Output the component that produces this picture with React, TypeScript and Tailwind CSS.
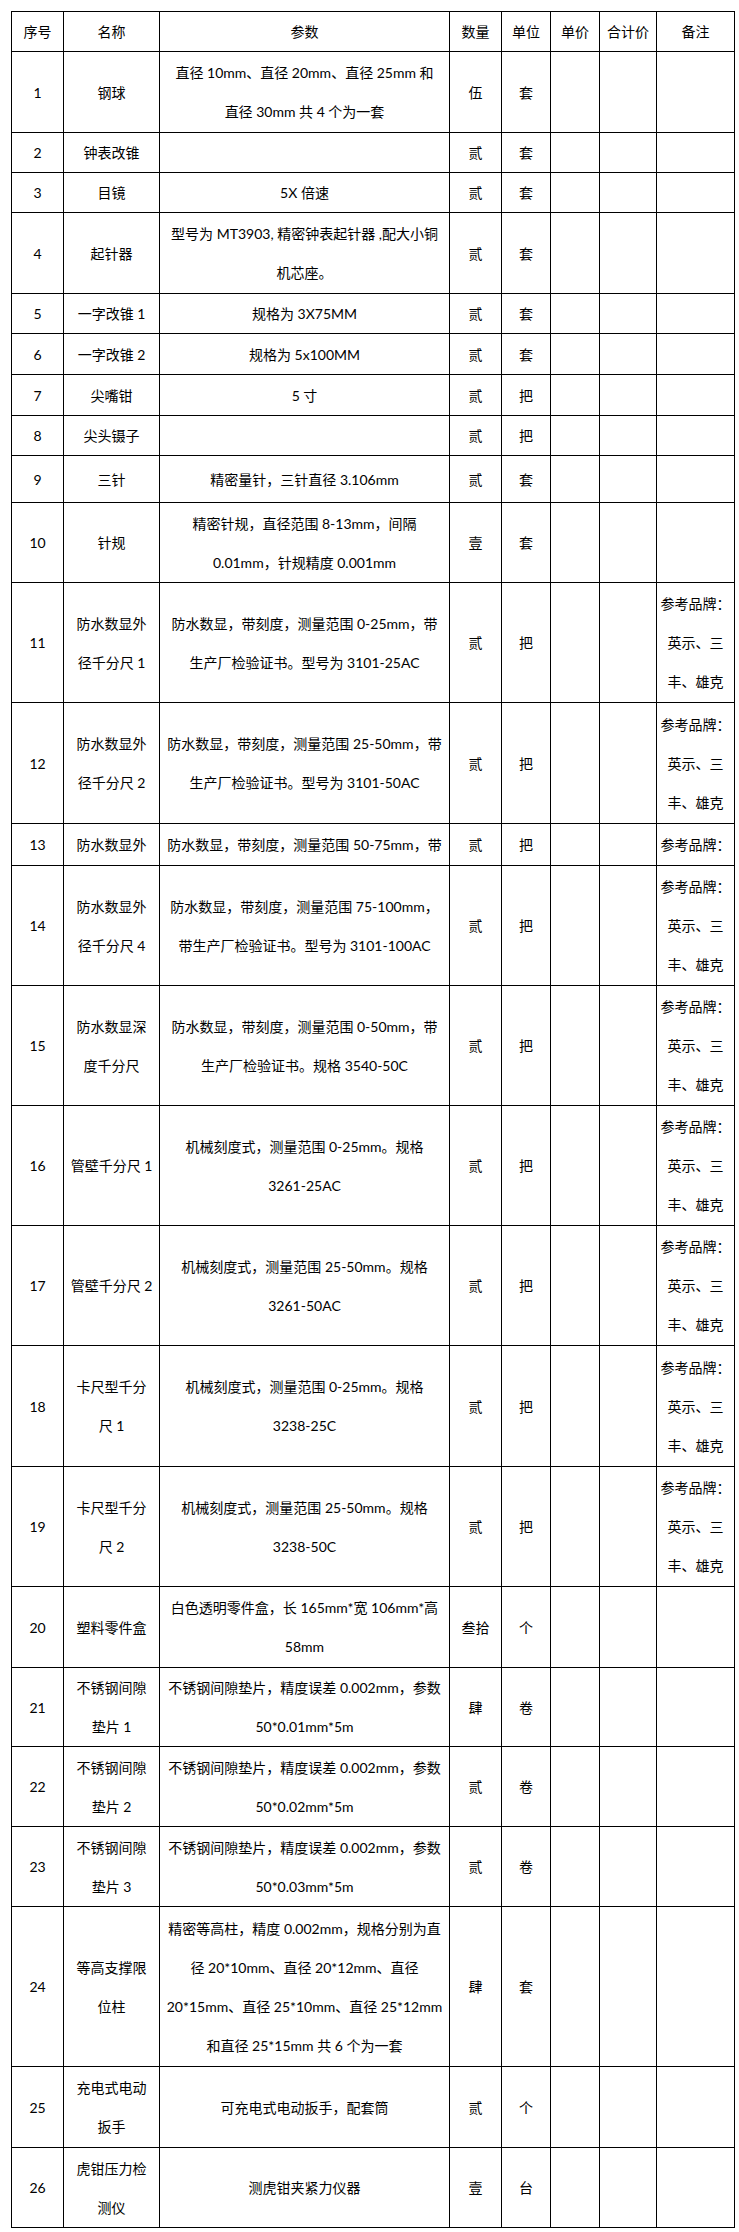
type Row = {
  no: string
  name: string[]
  spec: string[]
  qty: string
  unit: string
  note?: string[]
  h: number
}

const BRAND = ['参考品牌：', '英示、三', '丰、雄克']

const rows: Row[] = [
  { no: '1', name: ['钢球'], spec: ['直径 10mm、直径 20mm、直径 25mm 和', '直径 30mm 共 4 个为一套'], qty: '伍', unit: '套', h: 81 },
  { no: '2', name: ['钟表改锥'], spec: [], qty: '贰', unit: '套', h: 40 },
  { no: '3', name: ['目镜'], spec: ['5X 倍速'], qty: '贰', unit: '套', h: 40 },
  { no: '4', name: ['起针器'], spec: ['型号为 MT3903, 精密钟表起针器 ,配大小铜', '机芯座。'], qty: '贰', unit: '套', h: 81 },
  { no: '5', name: ['一字改锥 1'], spec: ['规格为 3X75MM'], qty: '贰', unit: '套', h: 40 },
  { no: '6', name: ['一字改锥 2'], spec: ['规格为 5x100MM'], qty: '贰', unit: '套', h: 41 },
  { no: '7', name: ['尖嘴钳'], spec: ['5 寸'], qty: '贰', unit: '把', h: 41 },
  { no: '8', name: ['尖头镊子'], spec: [], qty: '贰', unit: '把', h: 40 },
  { no: '9', name: ['三针'], spec: ['精密量针，三针直径 3.106mm'], qty: '贰', unit: '套', h: 47 },
  { no: '10', name: ['针规'], spec: ['精密针规，直径范围 8-13mm，间隔', '0.01mm，针规精度 0.001mm'], qty: '壹', unit: '套', h: 80 },
  { no: '11', name: ['防水数显外', '径千分尺 1'], spec: ['防水数显，带刻度，测量范围 0-25mm，带', '生产厂检验证书。型号为 3101-25AC'], qty: '贰', unit: '把', note: BRAND, h: 120 },
  { no: '12', name: ['防水数显外', '径千分尺 2'], spec: ['防水数显，带刻度，测量范围 25-50mm，带', '生产厂检验证书。型号为 3101-50AC'], qty: '贰', unit: '把', note: BRAND, h: 121 },
  { no: '13', name: ['防水数显外'], spec: ['防水数显，带刻度，测量范围 50-75mm，带'], qty: '贰', unit: '把', note: ['参考品牌：'], h: 42 },
  { no: '14', name: ['防水数显外', '径千分尺 4'], spec: ['防水数显，带刻度，测量范围 75-100mm，', '带生产厂检验证书。型号为 3101-100AC'], qty: '贰', unit: '把', note: BRAND, h: 120 },
  { no: '15', name: ['防水数显深', '度千分尺'], spec: ['防水数显，带刻度，测量范围 0-50mm，带', '生产厂检验证书。规格 3540-50C'], qty: '贰', unit: '把', note: BRAND, h: 120 },
  { no: '16', name: ['管壁千分尺 1'], spec: ['机械刻度式，测量范围 0-25mm。规格', '3261-25AC'], qty: '贰', unit: '把', note: BRAND, h: 120 },
  { no: '17', name: ['管壁千分尺 2'], spec: ['机械刻度式，测量范围 25-50mm。规格', '3261-50AC'], qty: '贰', unit: '把', note: BRAND, h: 120 },
  { no: '18', name: ['卡尺型千分', '尺 1'], spec: ['机械刻度式，测量范围 0-25mm。规格', '3238-25C'], qty: '贰', unit: '把', note: BRAND, h: 121 },
  { no: '19', name: ['卡尺型千分', '尺 2'], spec: ['机械刻度式，测量范围 25-50mm。规格', '3238-50C'], qty: '贰', unit: '把', note: BRAND, h: 120 },
  { no: '20', name: ['塑料零件盒'], spec: ['白色透明零件盒，长 165mm*宽 106mm*高', '58mm'], qty: '叁拾', unit: '个', h: 81 },
  { no: '21', name: ['不锈钢间隙', '垫片 1'], spec: ['不锈钢间隙垫片，精度误差 0.002mm，参数', '50*0.01mm*5m'], qty: '肆', unit: '卷', h: 78 },
  { no: '22', name: ['不锈钢间隙', '垫片 2'], spec: ['不锈钢间隙垫片，精度误差 0.002mm，参数', '50*0.02mm*5m'], qty: '贰', unit: '卷', h: 80 },
  { no: '23', name: ['不锈钢间隙', '垫片 3'], spec: ['不锈钢间隙垫片，精度误差 0.002mm，参数', '50*0.03mm*5m'], qty: '贰', unit: '卷', h: 80 },
  {
    no: '24',
    name: ['等高支撑限', '位柱'],
    spec: ['精密等高柱，精度 0.002mm，规格分别为直', '径 20*10mm、直径 20*12mm、直径', '20*15mm、直径 25*10mm、直径 25*12mm', '和直径 25*15mm 共 6 个为一套'],
    qty: '肆',
    unit: '套',
    h: 160,
  },
  { no: '25', name: ['充电式电动', '扳手'], spec: ['可充电式电动扳手，配套筒'], qty: '贰', unit: '个', h: 81 },
  { no: '26', name: ['虎钳压力检', '测仪'], spec: ['测虎钳夹紧力仪器'], qty: '壹', unit: '台', h: 80 },
]

function Lines({ lines }: { lines?: string[] }) {
  if (!lines || lines.length === 0) return null
  return (
    <>
      {lines.map((l, i) => (
        <div key={i} className="whitespace-nowrap">
          {l}
        </div>
      ))}
    </>
  )
}

const td = 'border border-black p-0 text-center align-middle overflow-hidden'

export default function App() {
  return (
    <div
      className="min-h-screen bg-white pt-[11px] pl-[11px] text-[14px] leading-[39px] text-black"
      style={{ fontFamily: 'Lato, "Noto Sans CJK SC", sans-serif' }}
    >
      <table className="table-fixed border-collapse w-[723px]">
        <colgroup>
          <col className="w-[52px]" />
          <col className="w-[96px]" />
          <col className="w-[290px]" />
          <col className="w-[52px]" />
          <col className="w-[49px]" />
          <col className="w-[49px]" />
          <col className="w-[57px]" />
          <col className="w-[78px]" />
        </colgroup>
        <thead>
          <tr className="h-[40px]">
            {['序号', '名称', '参数', '数量', '单位', '单价', '合计价', '备注'].map((t) => (
              <th key={t} className={`${td} font-normal`}>
                {t}
              </th>
            ))}
          </tr>
        </thead>
        <tbody>
          {rows.map((r) => (
            <tr key={r.no} style={{ height: r.h }}>
              <td className={td}>{r.no}</td>
              <td className={td}>
                <Lines lines={r.name} />
              </td>
              <td className={td}>
                <Lines lines={r.spec} />
              </td>
              <td className={td}>{r.qty}</td>
              <td className={td}>{r.unit}</td>
              <td className={td}></td>
              <td className={td}></td>
              <td className={td}>
                <Lines lines={r.note} />
              </td>
            </tr>
          ))}
        </tbody>
      </table>
    </div>
  )
}
